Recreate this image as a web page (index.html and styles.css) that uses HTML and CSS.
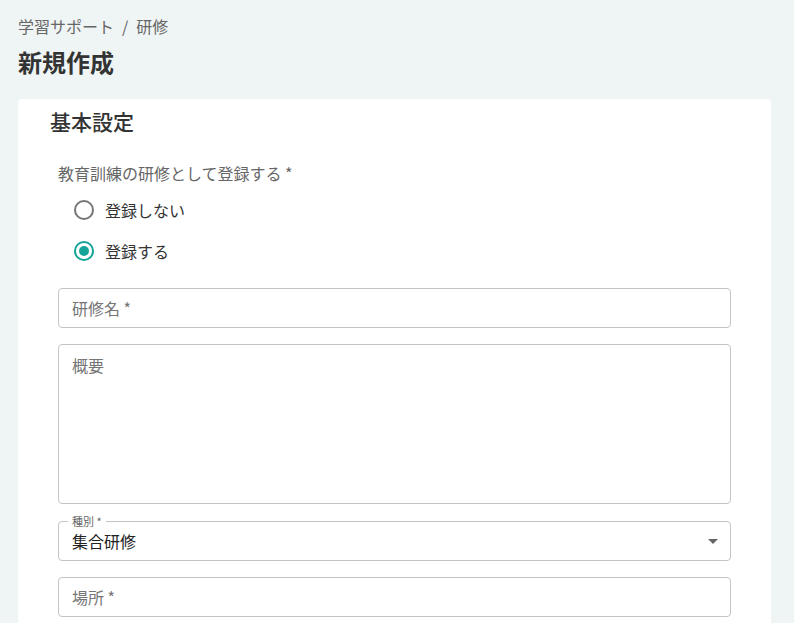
FILE: index.html
```html
<!DOCTYPE html>
<html lang="ja">
<head>
  <meta charset="UTF-8">
  <title>新規作成</title>
  <link rel="stylesheet" href="styles.css">
</head>
<body>
  <div class="breadcrumb">
    <span>学習サポート</span>
    <span class="sep">/</span>
    <span>研修</span>
  </div>
  <h1 class="page-title">新規作成</h1>

  <div class="card">
    <h2 class="card-title">基本設定</h2>
    <div class="form">
      <div class="radio-group">
        <div class="group-label">教育訓練の研修として登録する *</div>
        <label class="radio">
          <span class="radio-circle"></span>
          <span>登録しない</span>
        </label>
        <label class="radio checked">
          <span class="radio-circle"></span>
          <span>登録する</span>
        </label>
      </div>

      <div class="field">
        <span class="placeholder">研修名 *</span>
      </div>
      <div class="field textarea">
        <span class="placeholder">概要</span>
      </div>
      <div class="field select">
        <span class="legend">種別 *</span>
        <span class="value">集合研修</span>
        <span class="arrow"></span>
      </div>
      <div class="field">
        <span class="placeholder">場所 *</span>
      </div>
    </div>
  </div>
</body>
</html>
```

FILE: styles.css
```css
* {
  box-sizing: border-box;
}
body {
  margin: 0;
  padding: 14px 23px 0 18px;
  background-color: #eff4f4;
  font-family: "Noto Sans CJK JP", "Noto Sans", sans-serif;
  color: #333;
  overflow: hidden;
}
.breadcrumb {
  font-size: 16px;
  line-height: 24px;
  color: #666;
  display: flex;
  gap: 8px;
}
.page-title {
  margin: 8px 0 0 0;
  font-size: 24px;
  line-height: 32px;
  font-weight: 700;
  color: #333;
}
.card {
  margin-top: 21px;
  background-color: #fff;
  border-radius: 4px 4px 0 0;
  padding: 4px 40px 40px 32px;
}
.card-title {
  margin: 0;
  font-size: 21px;
  line-height: 36px;
  font-weight: 500;
  color: #333;
}
.form {
  margin: 0 0 0 8px;
  display: flex;
  flex-direction: column;
  gap: 16px;
}
.radio-group {
  padding-top: 22px;
  margin-bottom: 1px;
}
.group-label {
  font-size: 16px;
  line-height: 24px;
  color: #666;
  margin-bottom: 4px;
}
.radio {
  display: flex;
  align-items: center;
  height: 41px;
  padding-left: 16px;
  font-size: 16px;
  color: #333;
}
.radio-circle {
  width: 20px;
  height: 20px;
  border: 2px solid #757575;
  border-radius: 50%;
  margin-right: 11px;
  position: relative;
}
.radio.checked .radio-circle {
  border-color: #16a39a;
}
.radio.checked .radio-circle::after {
  content: "";
  position: absolute;
  left: 3px;
  top: 3px;
  width: 10px;
  height: 10px;
  border-radius: 50%;
  background-color: #16a39a;
}
.field {
  position: relative;
  height: 40px;
  border: 1px solid #c4c4c4;
  border-radius: 4px;
  display: flex;
  align-items: center;
  padding: 0 13px;
}
.field.textarea {
  height: 160px;
  align-items: flex-start;
  padding-top: 8px;
}
.field.select {
  margin-top: 1px;
}
.placeholder {
  font-size: 16px;
  line-height: 24px;
  color: #757575;
}
.field.select .value {
  font-size: 16px;
  color: #222;
  flex: 1;
}
.legend {
  position: absolute;
  left: 9px;
  top: -8px;
  background-color: #fff;
  padding: 0 4px;
  font-size: 11px;
  line-height: 14px;
  color: #666;
}
.arrow {
  width: 0;
  height: 0;
  border-left: 5px solid transparent;
  border-right: 5px solid transparent;
  border-top: 5px solid #666;
  margin-right: -1px;
}
```
